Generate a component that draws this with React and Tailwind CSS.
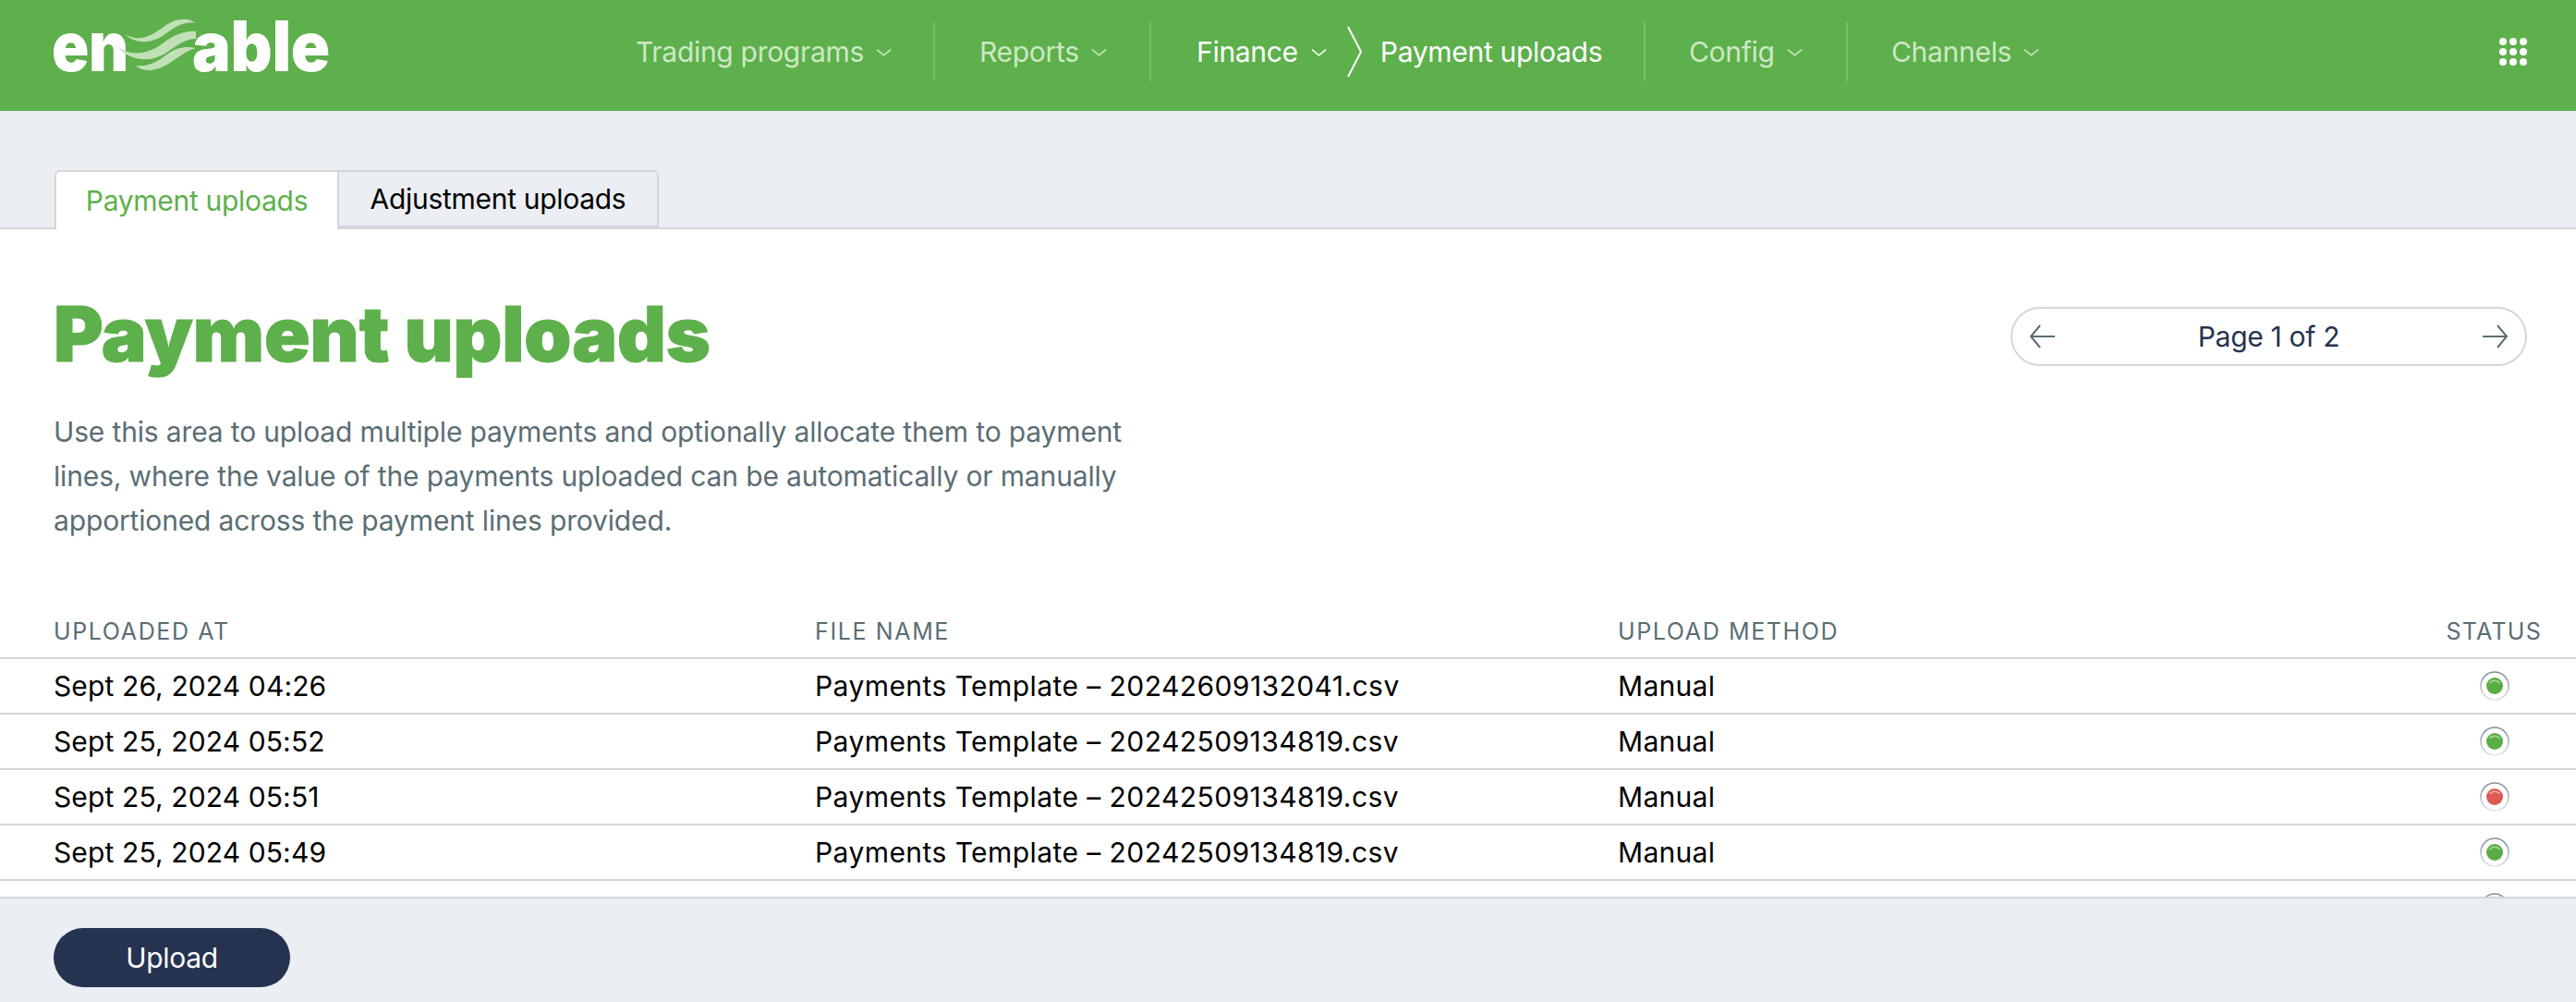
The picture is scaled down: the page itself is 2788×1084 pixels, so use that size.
import { Fragment } from "react";

const rows = [
  { at: "Sept 26, 2024 04:26", file: "Payments Template – 20242609132041.csv", ok: true },
  { at: "Sept 25, 2024 05:52", file: "Payments Template – 20242509134819.csv", ok: true },
  { at: "Sept 25, 2024 05:51", file: "Payments Template – 20242509134819.csv", ok: false },
  { at: "Sept 25, 2024 05:49", file: "Payments Template – 20242509134819.csv", ok: true },
  { at: "", file: "", ok: true },
];

const Chevron = ({ className }) => (
  <svg viewBox="0 0 18 10" fill="none" stroke="currentColor" strokeWidth="1.6" className={className}>
    <path d="M1 1.5 L9 8 L17 1.5" />
  </svg>
);

const Logo = () => (
  <svg viewBox="0 0 298 60" width="298" height="60" className="block overflow-visible" aria-label="enable">
    <g fontFamily="Inter, sans-serif" fontWeight="900" fill="#fff" fontSize="75">
      <text x="-2" y="58" textLength="83" lengthAdjust="spacingAndGlyphs">en</text>
      <text x="150" y="58" textLength="149" lengthAdjust="spacingAndGlyphs">able</text>
    </g>
    <g fill="#c2e0b8">
      <path d="M77 18 C95 28 108 18 122 8 C134 0 146 0 154 6 C140 4 132 10 122 17 C108 28 90 30 77 18 Z" />
      <path d="M69 31 C85 44 104 38 118 28 C130 19 142 14 154 15 L154 23 C142 23 134 30 122 38 C106 49 82 48 69 31 Z" />
      <path d="M89 52 C104 54 114 46 124 39 C134 32 144 31 154 33 C144 36 136 42 126 49 C112 58 98 60 89 52 Z" />
    </g>
  </svg>
);

const NavItem = ({ label, width, last }) => (
  <div className={`flex items-center gap-[13px] h-16 text-[#cde8c4] ${width} ${last ? "" : "border-r-2 border-[#79bf69]"}`}>
    <span>{label}</span>
    <Chevron className="w-[17px] h-[10px] mt-[2px]" />
  </div>
);

const StatusDot = ({ ok }) => (
  <svg viewBox="0 0 32 32" width="32" height="32" className="block">
    <defs>
      <linearGradient id="ringEdge" x1="0" y1="0" x2="0" y2="1">
        <stop offset="0" stopColor="#7f8d93" />
        <stop offset="1" stopColor="#e1e5e9" />
      </linearGradient>
    </defs>
    <circle cx="16" cy="16" r="15" fill="#fff" stroke="url(#ringEdge)" strokeWidth="1.6" />
    <circle cx="16" cy="16" r="9" fill={ok ? "#5aad43" : "#dd5a50"} />
    <path d="M10.5 13 A6.5 6 0 0 1 21.5 13" fill="none" stroke={ok ? "#a8d69a" : "#f0aaa5"} strokeWidth="1.4" />
  </svg>
);

export default function App() {
  return (
    <div className="h-[1084px] flex flex-col overflow-hidden bg-[#ebeef3] font-['Inter',sans-serif] text-[30px] tracking-[-0.01em]">
      <header className="h-[120px] shrink-0 flex items-center pb-[8px] bg-[#5db04b]">
        <div className="pl-[58px] w-[640px] shrink-0 -mt-[14px]">
          <Logo />
        </div>
        <nav className="flex items-center flex-1">
          <NavItem label="Trading programs" width="w-[372px] pl-[48px]" />
          <NavItem label="Reports" width="w-[234px] pl-[48px]" />
          <div className="flex items-center h-16 w-[535px] pl-[49px] border-r-2 border-[#79bf69] text-white">
            <span>Finance</span>
            <Chevron className="w-[17px] h-[10px] mt-[2px] ml-[14px]" />
            <svg viewBox="0 0 16 56" fill="none" stroke="currentColor" strokeWidth="2" className="w-4 h-14 ml-[22px]">
              <path d="M1 1 L15 28 L1 55" />
            </svg>
            <span className="ml-[20px]">Payment uploads</span>
          </div>
          <NavItem label="Config" width="w-[219px] pl-[47px]" />
          <NavItem label="Channels" width="w-[300px] pl-[47px]" last />
        </nav>
        <svg viewBox="0 0 30 30" width="30" height="30" fill="#fff" className="mr-[53px] shrink-0">
          {[4, 15, 26].map((y) => (
            <Fragment key={y}>
              {[4, 15, 26].map((x) => (
                <circle key={x} cx={x} cy={y} r="4" />
              ))}
            </Fragment>
          ))}
        </svg>
      </header>

      <div className="h-[128px] shrink-0 flex items-end pl-[59px] border-b-2 border-[#d3d7db]">
        <div className="flex -mb-[2px]">
          <button className="w-[308px] h-[64px] bg-white text-[#5db04b] border-2 border-b-0 border-[#d3d7db] rounded-tl-[6px]">
            Payment uploads
          </button>
          <button className="w-[346px] h-[62px] self-start text-black border-2 border-l-0 border-[#d3d7db] rounded-tr-[6px]">
            Adjustment uploads
          </button>
        </div>
      </div>

      <main className="flex-1 min-h-0 overflow-hidden bg-white">
        <div className="flex items-start justify-between pl-[58px] pr-[53px] pt-[64px]">
          <h1 className="text-[82px] leading-[100px] font-black text-[#5db04b] tracking-[-0.002em] [-webkit-text-stroke:1px_#5db04b]">
            Payment uploads
          </h1>
          <div className="flex items-center justify-between w-[559px] h-16 mt-[20px] px-[18px] border-2 border-[#d3d7db] rounded-full text-[#253350]">
            <svg viewBox="0 0 28 26" width="28" height="26" fill="none" stroke="#5a6e73" strokeWidth="2">
              <path d="M28 13 H2 M12 1 L2 13 L12 25" />
            </svg>
            <span>Page 1 of 2</span>
            <svg viewBox="0 0 28 26" width="28" height="26" fill="none" stroke="#5a6e73" strokeWidth="2">
              <path d="M0 13 H26 M16 1 L26 13 L16 25" />
            </svg>
          </div>
        </div>

        <p className="w-[1180px] ml-[58px] mt-[31px] leading-[48px] tracking-[-0.005em] text-[#5a6e73]">
          Use this area to upload multiple payments and optionally allocate them to payment lines, where the value of the payments uploaded can be automatically or manually apportioned across the payment lines provided.
        </p>

        <div className="grid grid-cols-[824px_869px_1fr] items-center h-[57px] mt-[69px] pl-[58px] pr-[37px] border-b-2 border-[#d3d7db] text-[25px] tracking-[0.065em] text-[#5a6e73]">
          <span>UPLOADED AT</span>
          <span>FILE NAME</span>
          <div className="flex justify-between">
            <span>UPLOAD METHOD</span>
            <span className="tracking-[0.05em]">STATUS</span>
          </div>
        </div>

        {rows.map((row, i) => (
          <div key={i} className="grid grid-cols-[824px_869px_1fr] items-center h-[60px] pl-[58px] pr-[72px] border-b-2 border-[#d3d7db] text-black">
            <span className="tracking-[0.004em]">{row.at}</span>
            <span className="tracking-[0.0145em]">{row.file}</span>
            <div className="flex justify-between items-center tracking-[0.01em]">
              <span>{row.at ? "Manual" : ""}</span>
              <StatusDot ok={row.ok} />
            </div>
          </div>
        ))}
      </main>

      <footer className="h-[114px] shrink-0 pl-[58px] pt-[32px] border-t-2 border-[#d3d7db]">
        <button className="w-[256px] h-16 rounded-full bg-[#253350] text-white">Upload</button>
      </footer>
    </div>
  );
}
